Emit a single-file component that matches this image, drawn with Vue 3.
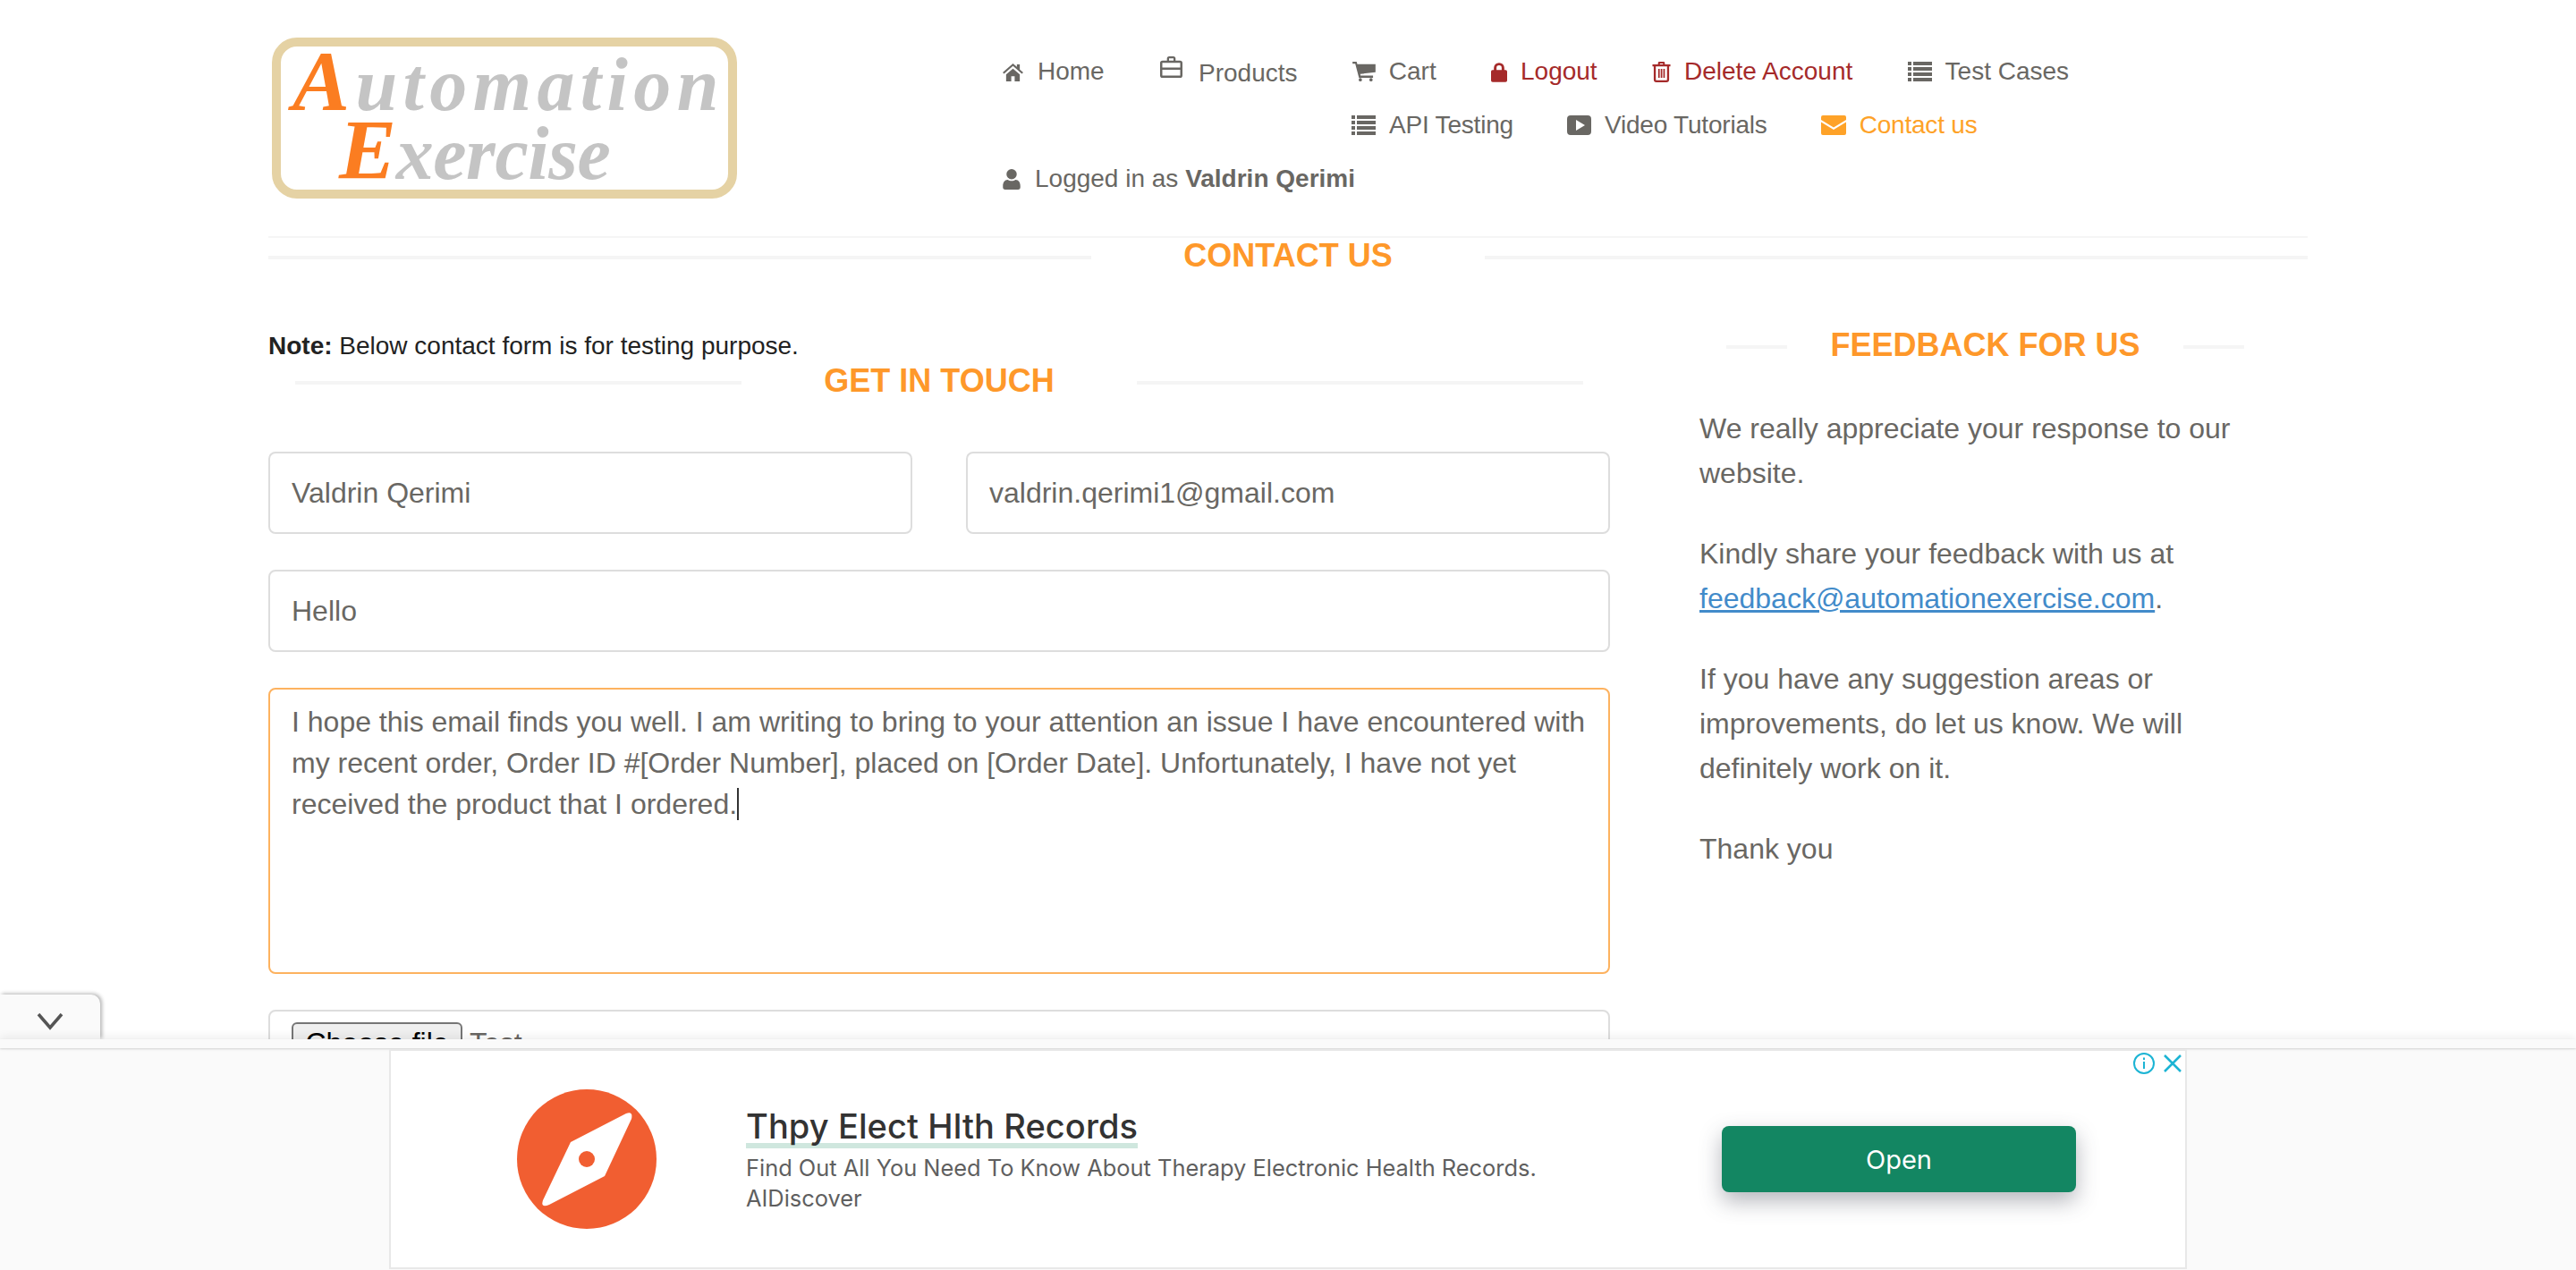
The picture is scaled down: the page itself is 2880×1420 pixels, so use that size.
<script setup>
const navTop = [
  { label: 'Home', icon: 'home', tone: '' },
  { label: 'Products', icon: 'briefcase', tone: 'low' },
  { label: 'Cart', icon: 'cart', tone: '' },
  { label: 'Logout', icon: 'lock', tone: 'danger' },
  { label: 'Delete Account', icon: 'trash', tone: 'danger' },
  { label: 'Test Cases', icon: 'list', tone: '' },
];
const navMid = [
  { label: 'API Testing', icon: 'list', tone: '' },
  { label: 'Video Tutorials', icon: 'play', tone: '' },
  { label: 'Contact us', icon: 'mail', tone: 'active' },
];
const icons = {
  home: { w: 25, h: 21, box: '0 0 26 22', d: 'M13 1 1 11.500l1.500 1.700L13 4l10.500 9.200 1.500-1.700-4-3.500V2h-3.400v3zM5 14v8h6v-6h4v6h6v-8l-8-7z' },
  briefcase: { w: 27, h: 26, box: '0 0 28 27', d: 'M9 6V3.600A2.600 2.600 0 0 1 11.600 1h4.800A2.600 2.600 0 0 1 19 3.600V6h5a3 3 0 0 1 3 3v14a3 3 0 0 1-3 3H4a3 3 0 0 1-3-3V9a3 3 0 0 1 3-3zm2.400 0h5.200V3.400h-5.200zM3.600 8.600v5.400h20.800V8.600zm0 8v6.800h20.800v-6.800z' },
  cart: { w: 26, h: 22, box: '0 0 28 24', d: 'M0 0h5l.8 3H28v9.800L9.300 15l.5 2H25v2.500H7.800L3.300 2.500H0zM9.500 20a2 2 0 1 1 0 4 2 2 0 0 1 0-4zM22.500 20a2 2 0 1 1 0 4 2 2 0 0 1 0-4z' },
  lock: { w: 18, h: 23, box: '0 0 20 25', d: 'M3.500 10V7.500a6.500 6.500 0 0 1 13 0V10H18a2 2 0 0 1 2 2v11a2 2 0 0 1-2 2H2a2 2 0 0 1-2-2V12a2 2 0 0 1 2-2zm3.300 0h6.400V7.500a3.200 3.200 0 0 0-6.400 0z' },
  trash: { w: 21, h: 24, box: '0 0 22 25', d: 'M7 4V2.500A1.500 1.500 0 0 1 8.500 1h5A1.500 1.500 0 0 1 15 2.500V4h6.500v2.400H20V22a3 3 0 0 1-3 3H5a3 3 0 0 1-3-3V6.400H.5V4zm2.200 0h3.600V3.200H9.200zM4.400 6.400V22a.6.6 0 0 0 .6.600h12a.6.6 0 0 0 .6-.6V6.400zm2.800 3h1.800v10.500H7.200zm3 0H12v10.500h-1.800zm3 0H15v10.500h-1.800z' },
  list: { w: 27, h: 22, box: '0 0 27 22', d: 'M0 0h4v4H0zM6 0h21v4H6zM0 6h4v4H0zM6 6h21v4H6zM0 12h4v4H0zM6 12h21v4H6zM0 18h4v4H0zM6 18h21v4H6z' },
  play: { w: 27, h: 22, box: '0 0 27 22', d: 'M4 0h19a4 4 0 0 1 4 4v14a4 4 0 0 1-4 4H4a4 4 0 0 1-4-4V4a4 4 0 0 1 4-4zm6 5v12l10-6z' },
  mail: { w: 28, h: 22, box: '0 0 28 22', d: 'M2 0h24a2 2 0 0 1 2 2v3L14 13.500 0 5V2a2 2 0 0 1 2-2zM0 7.500 14 16l14-8.500V20a2 2 0 0 1-2 2H2a2 2 0 0 1-2-2z' },
};
</script>

<template>
  <div class="page">
    <header class="header">
      <div class="logo">
        <div class="logo-line"><span class="logo-cap">A</span>utomation</div>
        <div class="logo-line logo-line-two"><span class="logo-cap">E</span>xercise</div>
      </div>
      <nav class="nav">
        <ul class="nav-row">
          <li v-for="item in navTop" :key="item.label" :class="['nav-item', item.tone]">
            <svg class="nav-icon" :width="icons[item.icon].w" :height="icons[item.icon].h" :viewBox="icons[item.icon].box"><path :d="icons[item.icon].d" /></svg>
            <span>{{ item.label }}</span>
          </li>
        </ul>
        <ul class="nav-row nav-row-mid">
          <li v-for="item in navMid" :key="item.label" :class="['nav-item', item.tone]">
            <svg class="nav-icon" :width="icons[item.icon].w" :height="icons[item.icon].h" :viewBox="icons[item.icon].box"><path :d="icons[item.icon].d" /></svg>
            <span>{{ item.label }}</span>
          </li>
        </ul>
        <div class="nav-row">
          <div class="nav-item">
            <svg class="nav-icon" width="22" height="23" viewBox="0 0 22 26"><path d="M11 0a6.500 6.500 0 1 1 0 13 6.500 6.500 0 0 1 0-13zM6 13.500c1.400 1 3 1.500 5 1.500s3.600-.5 5-1.500c3.800.3 6 3.200 6 8V23a3 3 0 0 1-3 3H3a3 3 0 0 1-3-3v-1.500c0-4.800 2.200-7.700 6-8z" /></svg>
            <span>Logged in as <b>Valdrin Qerimi</b></span>
          </div>
        </div>
      </nav>
    </header>

    <h2 class="title page-title"><span>Contact Us</span></h2>

    <div class="columns">
      <section class="form-col">
        <p class="note"><b>Note:</b> Below contact form is for testing purpose.</p>
        <h2 class="title form-title"><span>Get In Touch</span></h2>
        <form class="form">
          <div class="form-pair">
            <input class="field" value="Valdrin Qerimi" />
            <input class="field" value="valdrin.qerimi1@gmail.com" />
          </div>
          <input class="field" value="Hello" />
          <div class="field area">I hope this email finds you well. I am writing to bring to your attention an issue I have encountered with my recent order, Order ID #[Order Number], placed on [Order Date]. Unfortunately, I have not yet received the product that I ordered.<i class="caret"></i></div>
          <div class="field file-field">
            <button type="button" class="file-btn">Choose file</button>
            <span class="file-name">Test</span>
          </div>
        </form>
      </section>

      <aside class="info-col">
        <h2 class="title info-title"><span>Feedback For Us</span></h2>
        <div class="info-text">
          <p>We really appreciate your response to our website.</p>
          <p>Kindly share your feedback with us at <a href="#" class="mail-link">feedback@automationexercise.com</a>.</p>
          <p>If you have any suggestion areas or improvements, do let us know. We will definitely work on it.</p>
          <p>Thank you</p>
        </div>
      </aside>
    </div>

    <div class="anchor-ad">
      <div class="ad-tab">
        <svg viewBox="0 0 30 20" class="tab-chevron"><path d="M2 2l13 15L28 2" /></svg>
      </div>
      <div class="ad-strip"></div>
      <div class="ad-body">
        <div class="ad-frame">
          <div class="ad-choice">
            <svg viewBox="0 0 26 26" class="ad-info"><circle cx="13" cy="13" r="11" /><path d="M13 11v8M13 6.500v2.500" /></svg>
            <svg viewBox="0 0 22 22" class="ad-close"><path d="M2 2l18 18M20 2L2 20" /></svg>
          </div>
          <svg class="compass" viewBox="0 0 156 156">
            <circle cx="78" cy="78" r="78" fill="#f15e31" />
            <path d="M60 59 122 27Q130 24 128 33L98 97 36 129Q26 133 29 124z" fill="#fff" />
            <circle cx="78" cy="78" r="9" fill="#f15e31" />
          </svg>
          <div class="ad-copy">
            <div class="ad-head">Thpy Elect Hlth Records</div>
            <div class="ad-desc ad-desc-first">Find Out All You Need To Know About Therapy Electronic Health Records.</div>
            <div class="ad-desc">AIDiscover</div>
          </div>
          <button type="button" class="ad-open">Open</button>
        </div>
      </div>
    </div>
  </div>
</template>

<style>
html, body {
  margin: 0;
  background: #fff;
  overflow: hidden;
}
</style>

<style scoped>
.page {
  position: relative;
  height: 1420px;
  overflow: hidden;
  font-family: "Liberation Sans", Arial, sans-serif;
  color: #696763;
  background: #fff;
}

.header {
  position: relative;
  z-index: 1;
  width: 2280px;
  height: 264px;
  margin: 0 auto;
  display: flex;
  border-bottom: 2px solid #f5f5f5;
}

.logo {
  flex: none;
  width: 520px;
  height: 180px;
  margin: 42px 0 0 4px;
  box-sizing: border-box;
  border: 10px solid #e5d2a4;
  border-radius: 28px;
  font-family: "Liberation Serif", serif;
  font-style: italic;
  font-weight: bold;
  color: #c4c4c4;
  font-size: 84px;
  line-height: 77px;
  letter-spacing: 6.4px;
  padding: 4px 0 0 13px;
  filter: blur(0.7px);
}

.logo-line-two {
  padding-left: 52px;
  letter-spacing: -0.4px;
}

.logo-cap {
  color: #fb7d21;
  font-size: 96px;
  line-height: 0;
}

.nav {
  margin-left: 296px;
  padding-top: 64px;
  font-size: 28px;
}

.nav-row {
  display: flex;
  list-style: none;
  margin: 0;
  padding: 0;
  height: 60px;
  align-items: flex-start;
  gap: 61.3px;
}

.nav-row-mid {
  padding-left: 391px;
  gap: 60px;
  letter-spacing: -0.2px;
}

.nav-item {
  display: flex;
  align-items: center;
  gap: 15px;
  height: 32px;
  white-space: nowrap;
}

.nav-item b {
  font-weight: 700;
}

.nav-item.low {
  gap: 17px;
}

.nav-item.low span {
  position: relative;
  top: 2px;
}

.nav-item.low .nav-icon {
  position: relative;
  top: -5px;
}

.nav-item.danger {
  color: #a52a2a;
}

.nav-item.active {
  color: #fea228;
}

.nav-icon {
  fill: currentColor;
  flex: none;
}

.title {
  color: #fe982a;
  font-size: 36px;
  font-weight: bold;
  text-transform: uppercase;
  text-align: center;
  margin: 0;
  height: 44px;
  line-height: 44px;
  position: relative;
}

.title span {
  background: #fff;
  position: relative;
  top: 1px;
  padding: 0 48px;
}

.title::before {
  content: "";
  position: absolute;
  left: 0;
  right: 0;
  top: 23px;
  height: 4px;
  background: #f5f5f5;
}

.page-title {
  width: 2280px;
  margin: -3px auto 0;
}

.page-title span {
  padding: 0 103px;
}

.columns {
  width: 2280px;
  margin: 0 auto;
  display: flex;
}

.form-col {
  width: 1500px;
  flex: none;
}

.note {
  margin: 64px 0 0;
  color: #222;
  font-size: 28px;
  line-height: 32px;
}

.form-title {
  margin: 0 30px;
}

.form-title span {
  padding: 0 92px;
}

.form {
  margin-top: 58px;
  display: flex;
  flex-direction: column;
  gap: 40px;
}

.form-pair {
  display: flex;
  gap: 60px;
}

.field {
  box-sizing: border-box;
  width: 100%;
  height: 92px;
  border: 2px solid #ddd;
  border-radius: 8px;
  padding: 0 24px;
  font: 32px/46px "Liberation Sans", Arial, sans-serif;
  color: #696763;
  background: #fff;
  outline: none;
}

.area {
  height: 320px;
  padding: 13px 24px;
  border-color: #fdb25f;
}

.caret {
  display: inline-block;
  width: 2px;
  height: 36px;
  background: #333;
  vertical-align: -7px;
}

.file-field {
  padding: 12px 24px;
  display: flex;
  align-items: flex-start;
  gap: 8px;
  height: 120px;
}

.file-btn {
  flex: none;
  width: 191px;
  height: 46px;
  border: 2px solid #767676;
  border-radius: 6px;
  background: #efefef;
  font: 32px "Liberation Sans", Arial, sans-serif;
  color: #000;
  padding: 0;
}

.file-name {
  line-height: 46px;
}

.info-col {
  margin-left: 100px;
  width: 670px;
  flex: none;
}

.info-title {
  margin: 56px 0 0 30px;
  width: 579px;
}

.info-text {
  margin-top: 47px;
  font-size: 32px;
  line-height: 50px;
}

.info-text p {
  margin: 0 0 40px;
}

.mail-link {
  color: #428bca;
}

.anchor-ad {
  position: absolute;
  z-index: 2;
  left: 0;
  right: 0;
  bottom: 0;
  height: 258px;
  display: flex;
  flex-direction: column;
}

.ad-tab {
  position: absolute;
  left: 0;
  top: -50px;
  width: 112px;
  height: 50px;
  padding-top: 10px;
  background: #fafafa;
  border-radius: 0 10px 0 0;
  box-shadow: 2px -1px 4px rgba(0, 0, 0, 0.3);
  display: flex;
  align-items: center;
  justify-content: center;
  box-sizing: border-box;
}

.tab-chevron {
  width: 30px;
  height: 20px;
  fill: none;
  stroke: #555;
  stroke-width: 3.5;
}

.ad-strip {
  height: 10px;
  background: #fafafa;
  box-shadow: 0 -3px 10px rgba(0, 0, 0, 0.07), 0 1px 2px rgba(0, 0, 0, 0.15);
  position: relative;
}

.ad-body {
  flex: 1;
  background: #fafafa;
  display: flex;
  justify-content: center;
  padding-top: 1px;
}

.ad-frame {
  position: relative;
  box-sizing: border-box;
  width: 2010px;
  height: 246px;
  background: #fff;
  border: 2px solid #e8e8e8;
  display: flex;
  align-items: center;
}

.ad-choice {
  position: absolute;
  top: 1px;
  right: 3px;
  display: flex;
  gap: 8px;
  align-items: center;
}

.ad-info {
  width: 26px;
  height: 26px;
  fill: none;
  stroke: #1cb4d4;
  stroke-width: 2;
}

.ad-close {
  width: 22px;
  height: 22px;
  fill: none;
  stroke: #1cb4d4;
  stroke-width: 2.5;
}

.compass {
  width: 156px;
  height: 156px;
  margin-left: 141px;
  flex: none;
}

.ad-copy {
  margin: 5px 0 0 100px;
  width: 1091px;
  flex: none;
  font-family: Inter, "Liberation Sans", sans-serif;
}

.ad-head {
  display: inline-block;
  font-size: 38px;
  font-weight: 500;
  line-height: 38px;
  letter-spacing: 0.1px;
  color: #333;
  vertical-align: top;
  border-bottom: 6px solid #cfe7de;
}

.ad-desc {
  font-size: 25.4px;
  line-height: 34px;
  color: #5f5f5f;
}

.ad-desc-first {
  margin-top: 5px;
}

.ad-open {
  flex: none;
  width: 396px;
  height: 74px;
  border: 0;
  border-radius: 8px;
  background: #138662;
  color: #fff;
  font: 29px Inter, "Liberation Sans", sans-serif;
  box-shadow: 0 10px 24px rgba(60, 64, 80, 0.38);
}
</style>
